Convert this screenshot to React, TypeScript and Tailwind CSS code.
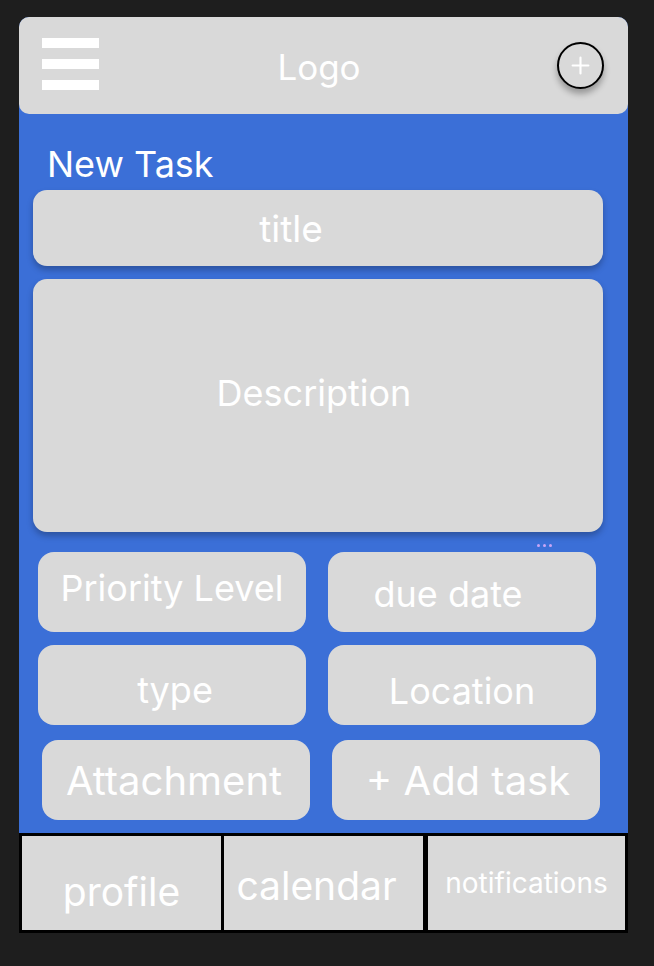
import { Plus } from 'lucide-react';

const font = { fontFamily: 'Inter, "Noto Sans", sans-serif' };

function Field({ label, className }: { label: string; className: string }) {
  return (
    <div className={`flex h-[80px] w-[268px] items-center justify-center rounded-[16px] bg-[#d9d9d9] leading-none text-white ${className}`}>
      {label}
    </div>
  );
}

export default function App() {
  return (
    <div className="h-[966px] w-[654px] bg-[#1e1e1e] pl-[19px] pt-[17px]" style={font}>
      <div className="w-[609px] rounded-t-[10px] bg-[#3b6fd7]">
        {/* top bar */}
        <header className="flex h-[97px] items-center rounded-[10px] bg-[#d9d9d9]">
          <div className="ml-[23px] flex w-[57px] flex-col gap-[11px] pb-[3px]">
            <span className="h-[10px] bg-white" />
            <span className="h-[10px] bg-white" />
            <span className="h-[10px] bg-white" />
          </div>
          <div className="flex-1 pr-[18px] pt-[3px] text-center text-[35px] leading-none text-white">Logo</div>
          <button type="button" className="mr-[24px] flex h-[47px] w-[47px] items-center justify-center rounded-full border-2 border-black bg-[#d9d9d9] text-white shadow-[0_5px_6px_rgba(0,0,0,0.3)]">
            <Plus size={27} strokeWidth={1.9} />
          </button>
        </header>

        <h1 className="ml-[28px] mt-[32px] text-[36px] leading-none text-white">New Task</h1>

        <div className="ml-[14px] mt-[8px] flex h-[76px] w-[570px] items-center justify-center rounded-[14px] bg-[#d9d9d9] pr-[54px] text-[37px] leading-none text-white shadow-[0_4px_6px_rgba(0,0,0,0.25)]">
          title
        </div>

        <div className="ml-[14px] mt-[13px] flex h-[253px] w-[570px] items-center justify-center rounded-[14px] bg-[#d9d9d9] pb-[26px] pr-[8px] text-[36px] leading-none text-white shadow-[0_4px_6px_rgba(0,0,0,0.25)]">
          Description
        </div>

        <div className="flex h-[20px] items-start justify-end gap-[3px] pr-[76px] pt-[12px]">
          <span className="h-[3px] w-[3px] rounded-full bg-[#c9a5f5]" />
          <span className="h-[3px] w-[3px] rounded-full bg-[#c9a5f5]" />
          <span className="h-[3px] w-[3px] rounded-full bg-[#c9a5f5]" />
        </div>

        <div className="ml-[19px] flex gap-[22px]">
          <Field label="Priority Level" className="pb-[8px] text-[36px]" />
          <Field label="due date" className="pr-[28px] pt-[4px] text-[36px]" />
        </div>
        <div className="ml-[19px] mt-[13px] flex gap-[22px]">
          <Field label="type" className="pl-[6px] pt-[10px] text-[36px]" />
          <Field label="Location" className="pt-[12px] text-[36px]" />
        </div>
        <div className="ml-[23px] mt-[15px] flex gap-[22px] pb-[13px]">
          <Field label="Attachment" className="pr-[4px] pt-[2px] text-[40px]" />
          <Field label="+ Add task" className="pl-[4px] pt-[2px] text-[40px]" />
        </div>
      </div>

      {/* bottom navigation */}
      <nav className="flex h-[100px] w-[609px] border-[3px] border-black bg-black">
        <div className="flex w-[199px] items-center justify-center bg-[#d9d9d9] pt-[16px] text-[39px] leading-none text-white">profile</div>
        <div className="ml-[3px] flex w-[199px] items-center justify-center bg-[#d9d9d9] pr-[14px] pt-[4px] text-[39px] leading-none text-white">calendar</div>
        <div className="ml-[5px] flex flex-1 items-center justify-center bg-[#d9d9d9] text-[28px] leading-none text-white">notifications</div>
      </nav>
    </div>
  );
}
